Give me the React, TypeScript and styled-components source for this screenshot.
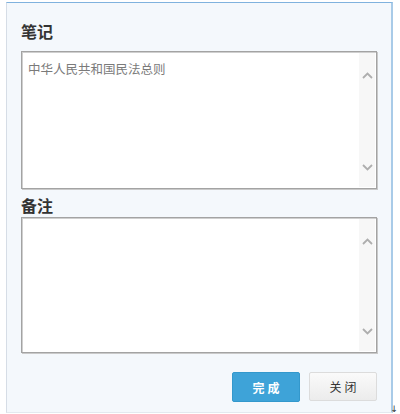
import React from "react";
import styled, { createGlobalStyle } from "styled-components";

const Global = createGlobalStyle`
  html, body { margin: 0; padding: 0; background: #ffffff; }
  body { font-family: "Noto Sans CJK SC", "Noto Sans", sans-serif; }
`;

const Page = styled.div`
  position: relative;
  width: 400px;
  height: 414px;
  overflow: hidden;
  padding: 2px 0 0 6px;
  box-sizing: border-box;
`;

const Panel = styled.div`
  width: 387px;
  height: 411px;
  box-sizing: border-box;
  background: #f4f8fc;
  border-top: 1px solid #7fb2de;
  border-right: 2px solid #a9cbe8;
  border-left: 1px solid #d6dde6;
  border-bottom: 1px solid #e3e9ef;
  padding: 18px 14px 0 14px;
  display: flex;
  flex-direction: column;
`;

const Title = styled.div<{ $mt?: number; $mb?: number }>`
  font-size: 16px;
  font-weight: 700;
  color: #333;
  line-height: 20px;
  margin-top: ${(p) => p.$mt ?? 0}px;
  margin-bottom: ${(p) => p.$mb ?? 10}px;
`;

const Box = styled.div<{ $h: number }>`
  width: 356px;
  height: ${(p) => p.$h}px;
  box-sizing: border-box;
  background: #fff;
  border: 1px solid #a3a3a3;
  box-shadow: inset 1px 1px 0 #cfcfcf, 1px 1px 0 #c9c9c9;
  display: flex;
`;

const Text = styled.div`
  flex: 1;
  padding: 9px 6px;
  font-size: 12.5px;
  line-height: 16px;
  color: #7a7a7a;
`;

const Scroll = styled.div`
  width: 16px;
  margin: 1px 1px 1px 0;
  background: #f7f7f7;
  display: flex;
  flex-direction: column;
  justify-content: space-between;
  align-items: center;
  padding: 19px 0 16px;
`;

const Footer = styled.div`
  display: flex;
  justify-content: flex-end;
  gap: 9px;
  margin-top: 19px;
  width: 356px;
`;

const Btn = styled.button<{ $primary?: boolean }>`
  width: 68px;
  height: ${(p) => (p.$primary ? 30 : 29)}px;
  border-radius: 2px;
  font-family: "Noto Sans CJK SC", sans-serif;
  font-size: 12px;
  letter-spacing: 3px;
  padding: 0 0 0 3px;
  cursor: pointer;
  border: 1px solid ${(p) => (p.$primary ? "#3398cc" : "#dcdcdc")};
  background: ${(p) => (p.$primary ? "#3ea3d8" : "linear-gradient(#fafafa, #ececec)")};
  color: ${(p) => (p.$primary ? "#ffffff" : "#333")};
  font-weight: ${(p) => (p.$primary ? 700 : 400)};
`;

const Corner = styled.span`
  position: absolute;
  right: 2px;
  bottom: 0px;
  font-size: 9px;
  line-height: 10px;
  color: #333;
  font-family: "DejaVu Sans", sans-serif;
`;

const Chevron = ({ up }: { up?: boolean }) => (
  <svg width="11" height="7" viewBox="0 0 11 7">
    <path
      d={up ? "M1 6 L5.5 1.5 L10 6" : "M1 1 L5.5 5.5 L10 1"}
      fill="none"
      stroke="#aeaeae"
      strokeWidth="1.8"
    />
  </svg>
);

const Area = ({ h, text }: { h: number; text?: string }) => (
  <Box $h={h}>
    <Text>{text}</Text>
    <Scroll>
      <Chevron up />
      <Chevron />
    </Scroll>
  </Box>
);

export default function App() {
  return (
    <Page>
      <Global />
      <Panel>
        <Title>笔记</Title>
        <Area h={138} text="中华人民共和国民法总则" />
        <Title $mt={6} $mb={2}>备注</Title>
        <Area h={136} />
        <Footer>
          <Btn $primary>完成</Btn>
          <Btn>关闭</Btn>
        </Footer>
      </Panel>
      <Corner>↓</Corner>
    </Page>
  );
}
